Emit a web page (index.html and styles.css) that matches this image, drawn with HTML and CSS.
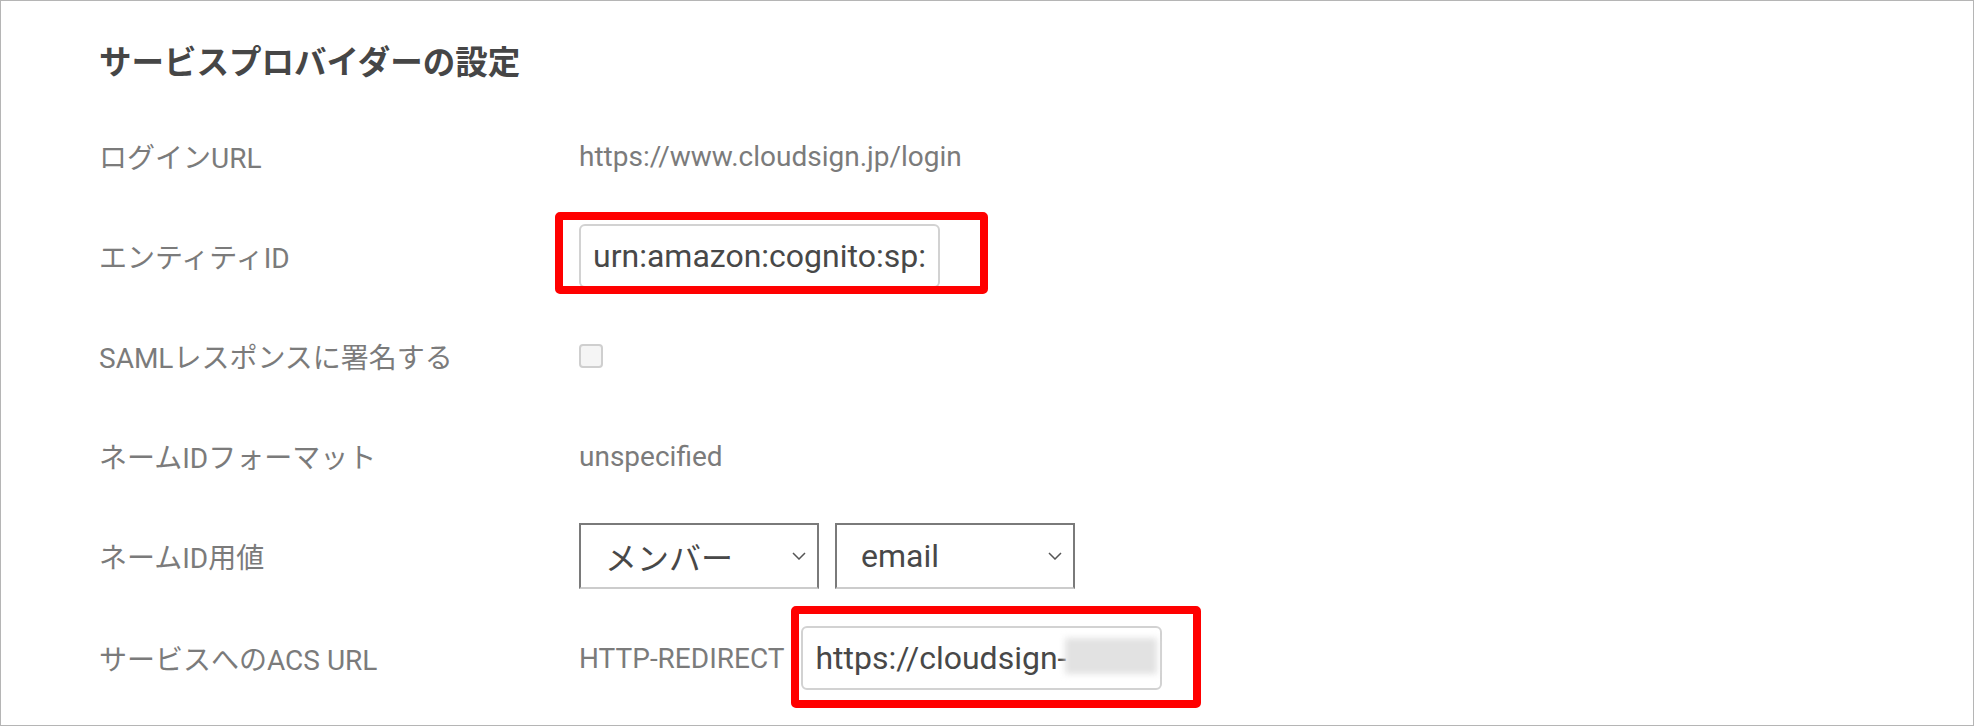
FILE: index.html
```html
<!DOCTYPE html>
<html lang="ja">
<head>
<meta charset="utf-8">
<title>サービスプロバイダーの設定</title>
<link rel="stylesheet" href="styles.css">
</head>
<body>
<section class="panel">
  <h2 class="title">サービスプロバイダーの設定</h2>
  <div class="rows">
    <div class="row">
      <div class="label">ログインURL</div>
      <div class="value">https://www.cloudsign.jp/login</div>
    </div>
    <div class="row">
      <div class="label">エンティティID</div>
      <div class="value">
        <div class="mark-wrap">
          <input class="text-input" type="text" value="urn:amazon:cognito:sp:" readonly>
          <span class="mark mark-entity"></span>
        </div>
      </div>
    </div>
    <div class="row">
      <div class="label">SAMLレスポンスに署名する</div>
      <div class="value"><span class="checkbox"></span></div>
    </div>
    <div class="row">
      <div class="label">ネームIDフォーマット</div>
      <div class="value">unspecified</div>
    </div>
    <div class="row">
      <div class="label">ネームID用値</div>
      <div class="value selects">
        <div class="select"><span>メンバー</span><svg class="chev" width="14" height="8" viewBox="0 0 14 8"><polyline points="1,1 7,7 13,1" fill="none" stroke="#555" stroke-width="1.5"/></svg></div>
        <div class="select"><span>email</span><svg class="chev" width="14" height="8" viewBox="0 0 14 8"><polyline points="1,1 7,7 13,1" fill="none" stroke="#555" stroke-width="1.5"/></svg></div>
      </div>
    </div>
    <div class="row row-last">
      <div class="label">サービスへのACS URL</div>
      <div class="value acs">
        <span class="binding">HTTP-REDIRECT</span>
        <div class="mark-wrap">
          <input class="text-input" type="text" value="https://cloudsign-" readonly>
          <span class="blur"></span>
          <span class="mark mark-acs"></span>
        </div>
      </div>
    </div>
  </div>
</section>
</body>
</html>
```
FILE: styles.css
```css
html, body {
  margin: 0;
  padding: 0;
  background: #fff;
}

body {
  font-family: "Roboto", "Noto Sans CJK JP", sans-serif;
}

.panel {
  box-sizing: border-box;
  width: 100%;
  height: 726px;
  border: 1px solid #b5b5b5;
  padding: 38px 0 0 98px;
  overflow: hidden;
}

.title {
  margin: 0;
  font-size: 32.5px;
  line-height: 48px;
  font-weight: 700;
  color: #464646;
}

.rows {
  margin-top: 19px;
}

.row {
  display: grid;
  grid-template-columns: 480px 1fr;
  align-items: center;
  height: 100px;
}

.row-last {
  height: 104px;
}

.label {
  font-size: 28px;
  color: #7b7b7b;
}

.value {
  font-size: 28px;
  color: #7b7b7b;
  display: flex;
  align-items: center;
}

.mark-wrap {
  position: relative;
  display: inline-block;
}

.text-input {
  display: block;
  box-sizing: border-box;
  width: 361px;
  height: 64px;
  border: 2px solid #d2d2d2;
  border-radius: 6px;
  padding: 0 12px;
  font-family: "Roboto", "Noto Sans CJK JP", sans-serif;
  font-size: 32px;
  color: #484848;
  background: #fff;
  outline: none;
}

.mark {
  position: absolute;
  border: 8px solid #ff0000;
  border-radius: 5px;
  pointer-events: none;
}

.mark-entity {
  top: -12px;
  right: -48px;
  bottom: -6px;
  left: -24px;
}

.mark-acs {
  top: -20px;
  right: -39px;
  bottom: -18px;
  left: -10px;
}

.blur {
  position: absolute;
  left: 264px;
  top: 12px;
  width: 92px;
  height: 36px;
  background: #e2e2e2;
  filter: blur(3px);
}

.checkbox {
  display: block;
  box-sizing: border-box;
  width: 24px;
  height: 24px;
  border: 2px solid #cfcfcf;
  border-radius: 4px;
  background: #f5f5f5;
}

.selects {
  gap: 16px;
}

.select {
  box-sizing: border-box;
  width: 240px;
  height: 66px;
  border: 2px solid #7a7a7a;
  border-bottom-color: #cccccc;
  display: flex;
  align-items: center;
  justify-content: space-between;
  padding: 0 11px 0 24px;
  font-size: 32px;
  color: #484848;
}

.chev {
  display: block;
}

.acs {
  gap: 17px;
}

.binding {
  color: #7b7b7b;
}
```
